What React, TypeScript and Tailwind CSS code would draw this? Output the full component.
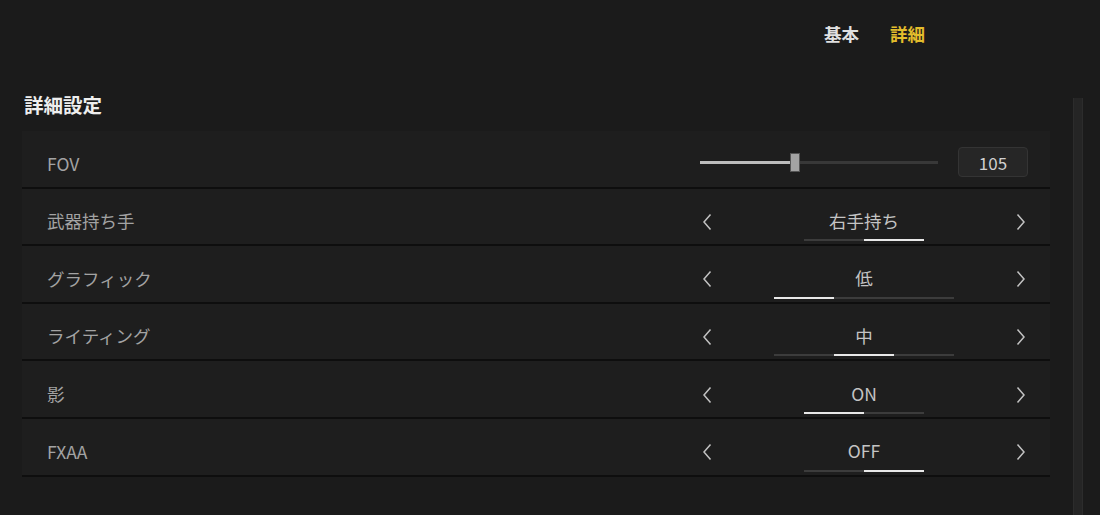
import React from "react";

const font = { fontFamily: '"Noto Sans CJK JP", "Noto Sans", sans-serif' };

function Chevron({ dir }: { dir: "l" | "r" }) {
  return (
    <svg width="12" height="18" viewBox="0 0 12 18" fill="none">
      {dir === "l" ? (
        <path d="M9.5 1.5 L3 9 L9.5 16.5" stroke="#c2c2c2" strokeWidth="1.5" />
      ) : (
        <path d="M2.5 1.5 L9 9 L2.5 16.5" stroke="#c2c2c2" strokeWidth="1.5" />
      )}
    </svg>
  );
}

function Row({ label, children }: { label: string; children: React.ReactNode }) {
  return (
    <div className="flex h-[57.6px] items-center border-b-2 border-[#0e0e0e] bg-[#1e1e1e]">
      <div className="pl-[25px] pt-[10px] text-[17.5px] text-[#a3a3a3] w-[678px]">{label}</div>
      <div className="flex-1 h-full">{children}</div>
    </div>
  );
}

function Selector({ value, count, active }: { value: string; count: number; active: number }) {
  return (
    <div className="flex h-full items-center pr-[22px]">
      <div className="w-[14px] flex justify-center pt-[11px]">
        <Chevron dir="l" />
      </div>
      <div className="flex-1 relative h-full flex items-center justify-center">
        <span className="text-[17.5px] text-[#c4c4c4] pt-[9px]">{value}</span>
        <div className="absolute bottom-[3px] left-0 right-0 flex justify-center">
          {Array.from({ length: count }).map((_, i) => (
            <div
              key={i}
              className={i === active ? "w-[60px] h-[2px] bg-[#e8e8e8]" : "w-[60px] h-[2px] bg-[#3c3c3c]"}
            />
          ))}
        </div>
      </div>
      <div className="w-[14px] flex justify-center pt-[11px]">
        <Chevron dir="r" />
      </div>
    </div>
  );
}

export default function App() {
  return (
    <div className="w-[1100px] h-[515px] overflow-hidden bg-[#1b1b1b] flex" style={font}>
      <div className="w-[1050px] pl-[22px] flex flex-col">
        <div className="h-[66px] flex items-center pl-[802px] gap-[31px] text-[17.5px] font-bold pt-[2px]">
          <span className="text-[#e0e0e0]">基本</span>
          <span className="text-[#e3bd2c]">詳細</span>
        </div>
        <div className="h-[65px] pl-[2px] pt-[24px] text-[19.5px] font-bold text-[#eeeeee]">詳細設定</div>
        <div className="flex flex-col">
          <Row label="FOV">
            <div className="flex h-full items-center pt-[7px]">
              <div className="relative w-[238px] h-[20px] flex items-center">
                <div className="w-[95px] h-[3px] bg-[#bdbdbd]" />
                <div className="flex-1 h-[3px] bg-[#383838]" />
                <div className="absolute left-[90px] top-[1px] w-[10px] h-[19px] bg-[#a3a3a3] border border-[#555]" />
              </div>
              <div className="ml-[20px] w-[70px] h-[30px] rounded-[4px] bg-[#262626] border border-[#343434] flex items-center justify-center text-[17px] text-[#d0d0d0]">
                105
              </div>
            </div>
          </Row>
          <Row label="武器持ち手">
            <Selector value="右手持ち" count={2} active={1} />
          </Row>
          <Row label="グラフィック">
            <Selector value="低" count={3} active={0} />
          </Row>
          <Row label="ライティング">
            <Selector value="中" count={3} active={1} />
          </Row>
          <Row label="影">
            <Selector value="ON" count={2} active={0} />
          </Row>
          <Row label="FXAA">
            <Selector value="OFF" count={2} active={1} />
          </Row>
        </div>
      </div>
      <div className="ml-[23px] mt-[98px] w-[10px] bg-[#252525] border-x border-[#2c2c2c]" />
    </div>
  );
}
